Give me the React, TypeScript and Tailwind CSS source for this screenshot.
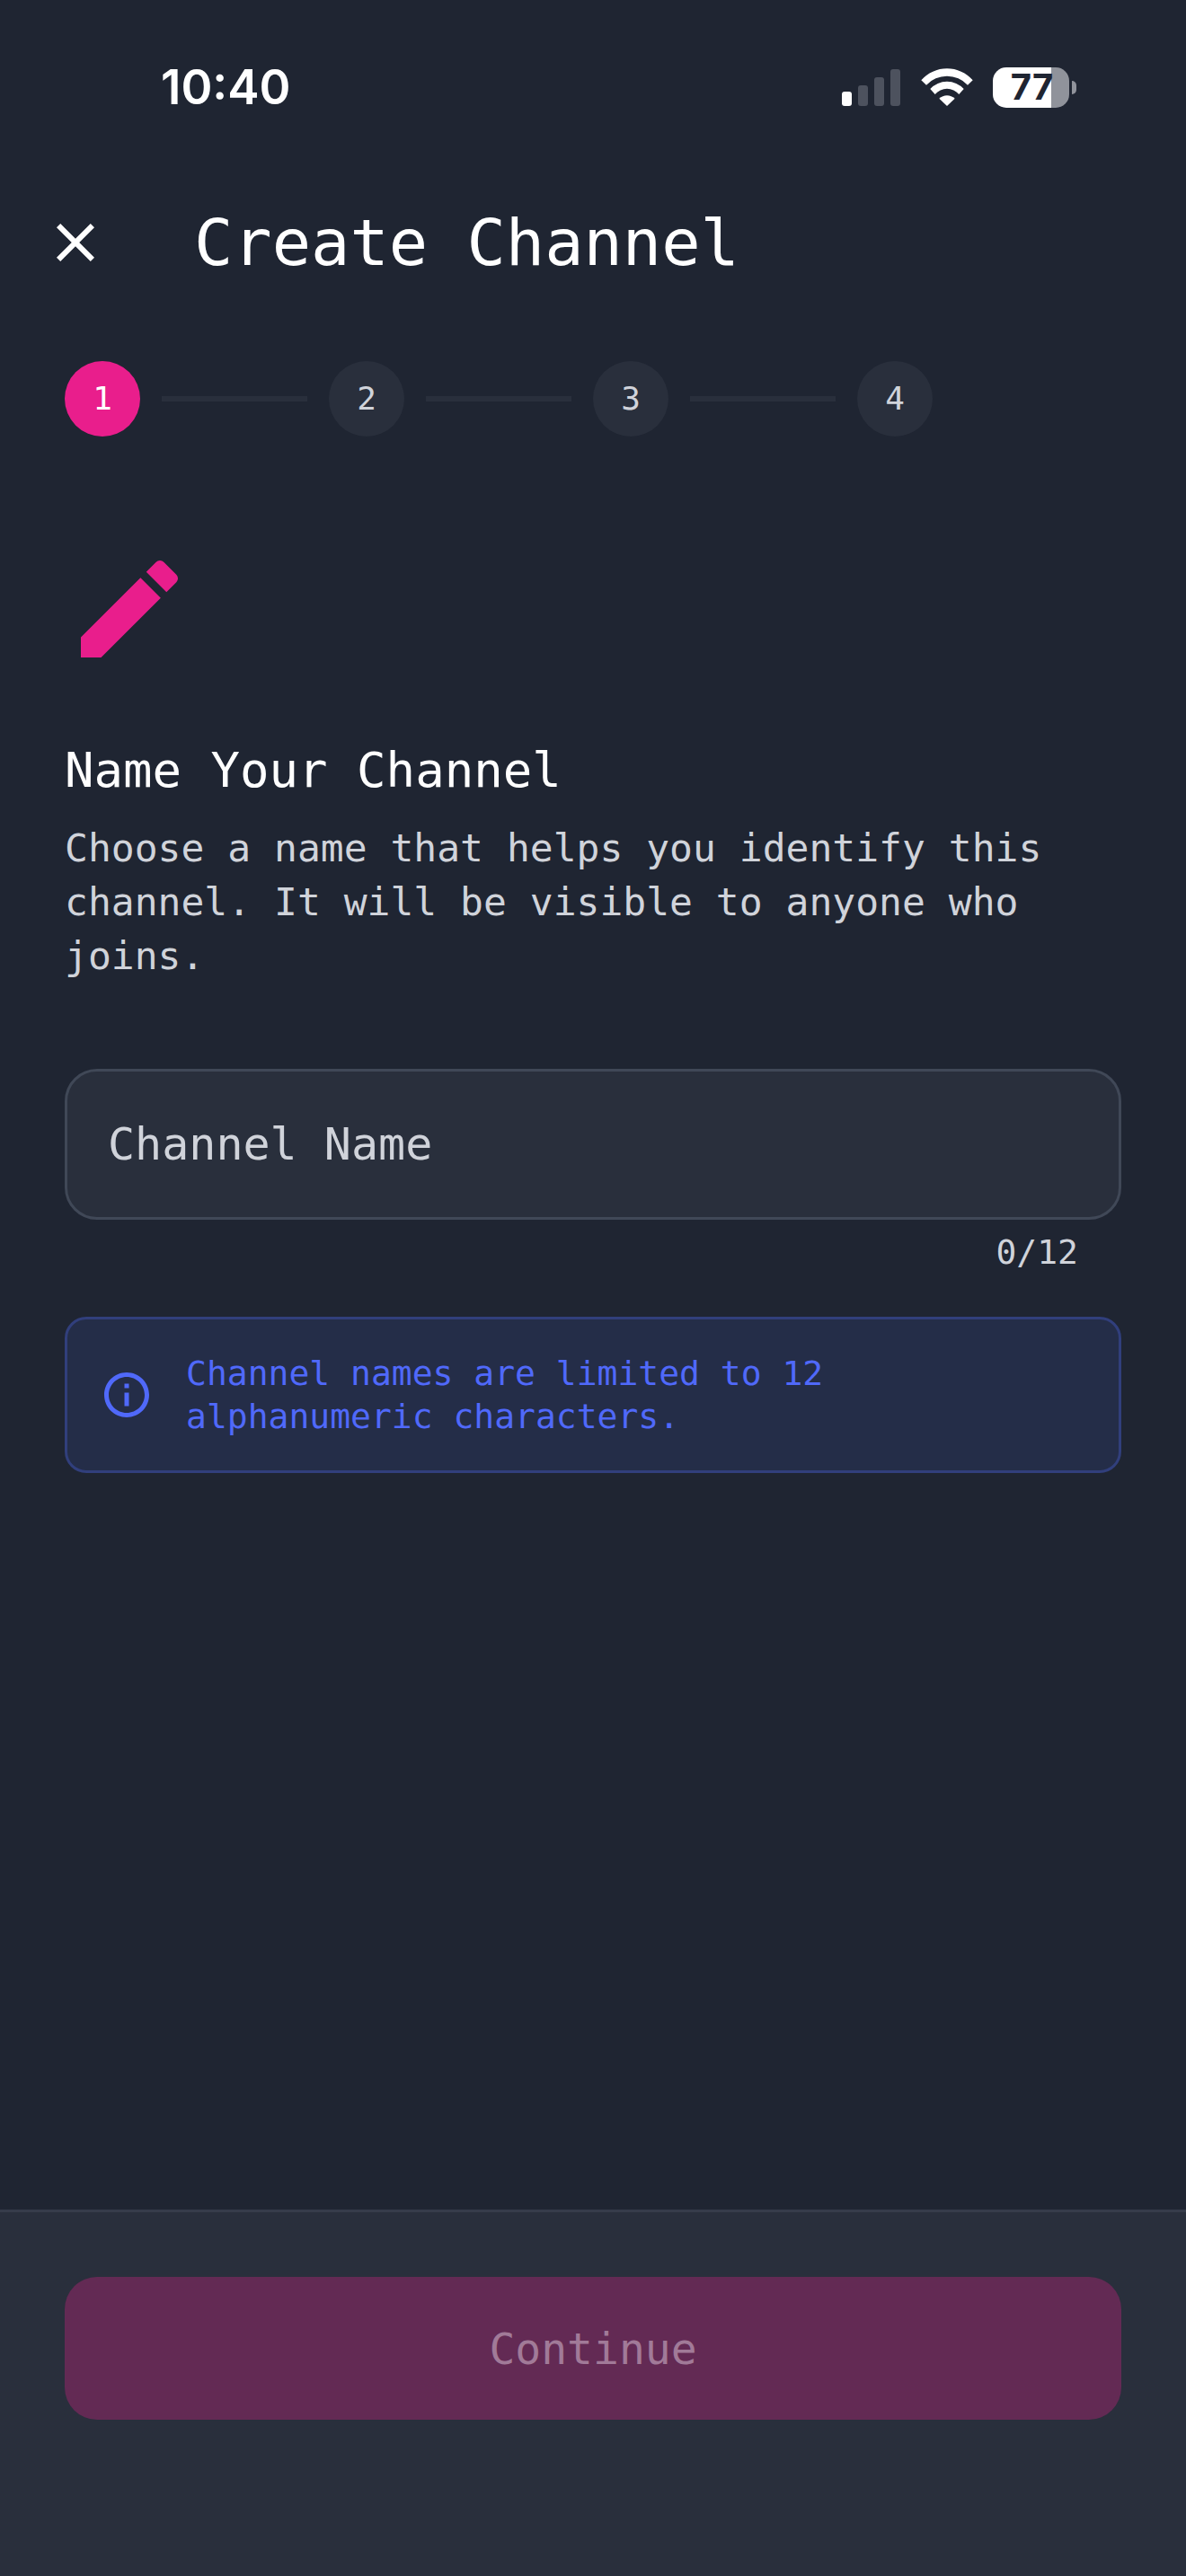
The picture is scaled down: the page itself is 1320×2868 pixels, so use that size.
import { useState } from "react";
import { MdClose, MdEdit, MdInfoOutline } from "react-icons/md";

const MAX_LENGTH = 12;
const steps = [1, 2, 3, 4];

function StatusBar() {
	return (
		<div className="flex h-[194px] items-center justify-between pl-[179px] pr-[122px] font-['Inter',sans-serif]">
			<span className="text-[53px] leading-none font-semibold">10:40</span>
			<div className="flex items-center">
				<svg className="mr-[22px] h-[42px] w-[66px]" viewBox="0 0 66 42">
					<rect x="0" y="26" width="11" height="16" rx="3" fill="#fff" />
					<g fill="#4d525e">
						<rect x="18" y="19" width="11" height="23" rx="3" />
						<rect x="36" y="10" width="11" height="32" rx="3" />
						<rect x="54" y="1" width="11" height="41" rx="3" />
					</g>
				</svg>
				<svg className="mr-[22px] h-[42px] w-[58px]" viewBox="0 0 58 42" fill="#fff">
					<path d="M.3 13.3A38.3 38.3 0 0 1 57.7 13.3L52 18.7A31.5 31.5 0 0 0 6 18.7Z" />
					<path d="M10.3 23A25.5 25.5 0 0 1 47.7 23L42.3 29A17.5 17.5 0 0 0 15.7 29Z" />
					<path d="M20.3 33.7A12.5 12.5 0 0 1 37.7 33.7L29 42Z" />
				</svg>
				<div className="flex h-[45px] w-[85px] items-center justify-center rounded-[15px] bg-linear-to-r from-white from-[65px] to-[#90939b] to-[65px] pl-[2px] text-[40px] leading-none font-bold text-[#1f2532]">
					77
				</div>
				<div className="ml-[3px] h-[15px] w-[5px] rounded-r-full bg-[#90939b]" />
			</div>
		</div>
	);
}

function Stepper({ current }: { current: number }) {
	return (
		<ol className="grid grid-cols-4">
			{steps.map((step, index) => (
				<li key={step} className="flex items-center gap-6">
					<span
						className={`flex size-[84px] shrink-0 items-center justify-center rounded-full text-[36px] leading-none ${
							step === current
								? "bg-[#e91e8c] text-white"
								: "bg-[#292f3c] text-[#d0d3da]"
						}`}>
						{step}
					</span>
					{index < steps.length - 1 && (
						<span className="mr-6 h-[6px] flex-1 bg-[#292f3c]" />
					)}
				</li>
			))}
		</ol>
	);
}

export default function App() {
	const [name, setName] = useState("");

	return (
		<div className="flex min-h-screen flex-col bg-[#1f2532] font-['DejaVu_Sans_Mono',monospace] text-white">
			<StatusBar />

			<header className="flex h-[152px] items-center gap-24 px-12">
				<button type="button" aria-label="Close">
					<MdClose className="size-[72px]" />
				</button>
				<h1 className="text-[72px] leading-none">Create Channel</h1>
			</header>

			<main className="flex-1 px-[72px] pt-14">
				<Stepper current={1} />

				<MdEdit className="mt-[120px] size-[144px] text-[#e91e8c]" />

				<h2 className="mt-[72px] text-[54px] leading-[72px]">
					Name Your Channel
				</h2>
				<p className="mt-5 text-[43px] leading-[60px] text-[#d0d3da]">
					Choose a name that helps you identify this channel. It will be visible
					to anyone who joins.
				</p>

				<input
					type="text"
					aria-label="Channel Name"
					placeholder="Channel Name"
					maxLength={MAX_LENGTH}
					value={name}
					onChange={(e) => setName(e.target.value.replace(/[^a-z0-9]/gi, ""))}
					className="mt-24 block h-[168px] w-full rounded-[36px] border-[3px] border-[#404857] bg-[#292f3c] px-[45px] text-[50px] outline-none placeholder:text-[#d0d3da]"
				/>
				<div className="mt-3 pr-12 text-right text-[38px] leading-[48px] text-[#d0d3da]">
					{name.length}/{MAX_LENGTH}
				</div>

				<div className="mt-12 flex items-center gap-9 rounded-3xl border-[3px] border-[#313f7c] bg-[#242d48] p-9 text-[#5069fa]">
					<MdInfoOutline className="size-[60px] shrink-0" />
					<p className="max-w-[800px] text-[38px] leading-[48px]">
						Channel names are limited to 12 alphanumeric characters.
					</p>
				</div>
			</main>

			<footer className="border-t-[3px] border-[#363c4a] bg-[#292f3c] px-[72px] pt-[72px] pb-[174px]">
				<button
					type="button"
					disabled={name.length === 0}
					className="h-[159px] w-full rounded-[36px] bg-[#e91e8c] text-[48px] disabled:bg-[#632a54] disabled:text-[#a17a98]">
					Continue
				</button>
			</footer>
		</div>
	);
}
